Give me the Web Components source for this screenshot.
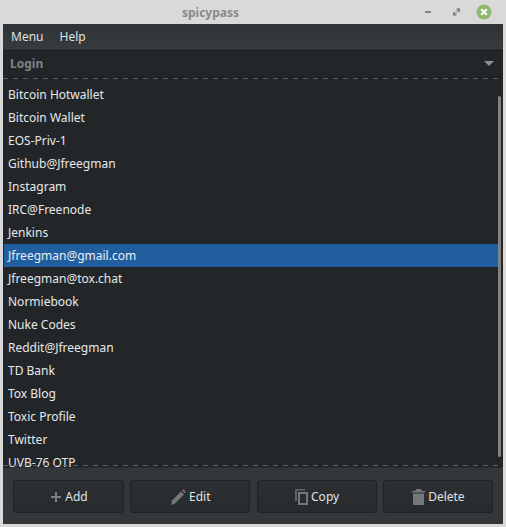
<!DOCTYPE html>
<html>
<head>
<meta charset="utf-8">
<title>spicypass</title>
<style>
  html, body { margin: 0; padding: 0; background: #d9d9d9; overflow: hidden; }
  body { font: 12px "Noto Sans", sans-serif; }
</style>
</head>
<body>
<app-window title="spicypass">
  <menu-bar slot="menu">
    <menu-item>Menu</menu-item>
    <menu-item>Help</menu-item>
  </menu-bar>
  <login-combo slot="combo">Login</login-combo>
  <entry-list slot="list">
    <entry-row>Bitcoin Hotwallet</entry-row>
    <entry-row>Bitcoin Wallet</entry-row>
    <entry-row>EOS-Priv-1</entry-row>
    <entry-row>Github@Jfreegman</entry-row>
    <entry-row>Instagram</entry-row>
    <entry-row>IRC@Freenode</entry-row>
    <entry-row>Jenkins</entry-row>
    <entry-row selected>Jfreegman@gmail.com</entry-row>
    <entry-row>Jfreegman@tox.chat</entry-row>
    <entry-row>Normiebook</entry-row>
    <entry-row>Nuke Codes</entry-row>
    <entry-row>Reddit@Jfreegman</entry-row>
    <entry-row>TD Bank</entry-row>
    <entry-row>Tox Blog</entry-row>
    <entry-row>Toxic Profile</entry-row>
    <entry-row>Twitter</entry-row>
    <entry-row>UVB-76 OTP</entry-row>
  </entry-list>
  <action-bar slot="actions">
    <action-button icon="add" style="width:111px">Add</action-button>
    <action-button icon="edit" style="width:120px">Edit</action-button>
    <action-button icon="copy" style="width:120px">Copy</action-button>
    <action-button icon="delete" style="width:110px">Delete</action-button>
  </action-bar>
</app-window>

<script>
class AppWindow extends HTMLElement {
  constructor() {
    super();
    this.attachShadow({ mode: 'open' });
  }

  connectedCallback() {
    this.shadowRoot.innerHTML = `
      <style>
        :host {
          display: flex;
          flex-direction: column;
          width: 506px;
          height: 527px;
          box-sizing: border-box;
          padding: 0 3px 3px 3px;
          background: #d9d9d9;
        }

        .titlebar {
          flex: none;
          height: 24px;
          display: flex;
          align-items: center;
          color: #8a8a8a;
          font-weight: 700;
          font-size: 12px;
        }

        .title {
          flex: 1;
          text-align: center;
        }

        .controls {
          display: flex;
          align-items: center;
          gap: 13px;
          padding-right: 11px;
        }

        .body {
          flex: 1;
          min-height: 0;
          display: flex;
          flex-direction: column;
          background: #232629;
        }

        svg { display: block; }
      </style>
      <div class="titlebar">
        <div class="title">${this.getAttribute('title')}</div>
        <div class="controls">
          <svg width="18" height="14" viewBox="0 0 18 14">
            <rect x="7" y="6" width="6" height="2" fill="#858585"/>
          </svg>
          <svg width="14" height="14" viewBox="0 0 14 14">
            <path d="M5.500 9 9.500 5" stroke="#b5b5b5" stroke-width="3"/>
            <path d="M7 3.500h4v4zM8 10.500H4v-4z" fill="#777"/>
          </svg>
          <svg width="16" height="16" viewBox="0 0 16 16">
            <circle cx="8" cy="8" r="7.500" fill="#8fb96c"/>
            <path d="M5.200 5.200l5.600 5.600M10.800 5.200l-5.600 5.600" stroke="#fff" stroke-width="2"/>
          </svg>
        </div>
      </div>
      <div class="body">
        <slot name="menu"></slot>
        <slot name="combo"></slot>
        <slot name="list"></slot>
        <slot name="actions"></slot>
      </div>
    `;
  }
}

class MenuBar extends HTMLElement {
  constructor() {
    super();
    this.attachShadow({ mode: 'open' });
    this.shadowRoot.innerHTML = `
      <style>
        :host {
          display: flex;
          flex: none;
          height: 26px;
          box-sizing: border-box;
          padding-left: 8px;
          gap: 16px;
          align-items: center;
          background: linear-gradient(#2f3336, #373b3e);
          border-bottom: 1px solid #2f3235;
        }
      </style>
      <slot></slot>
    `;
  }
}

class MenuItem extends HTMLElement {
  constructor() {
    super();
    this.attachShadow({ mode: 'open' });
    this.shadowRoot.innerHTML = `
      <style>
        :host {
          display: block;
          color: #dfe3e6;
          font: 12px "Noto Sans", sans-serif;
        }
      </style>
      <slot></slot>
    `;
  }
}

class LoginCombo extends HTMLElement {
  constructor() {
    super();
    this.attachShadow({ mode: 'open' });
    this.shadowRoot.innerHTML = `
      <style>
        :host {
          display: flex;
          flex: none;
          height: 28px;
          box-sizing: border-box;
          align-items: center;
          justify-content: space-between;
          padding: 0 9px 2px 7px;
          background: #232629;
          border-top: 1px solid #1d2022;
          border-bottom: 1px solid #1b1d1f;
          color: #7f8386;
          font: 700 12px "Noto Sans", sans-serif;
        }
        .arrow {
          width: 0;
          height: 0;
          border-left: 5px solid transparent;
          border-right: 5px solid transparent;
          border-top: 5px solid #8c8f91;
          margin-top: 1px;
        }
      </style>
      <slot></slot>
      <div class="arrow"></div>
    `;
  }
}

class EntryList extends HTMLElement {
  constructor() {
    super();
    this.attachShadow({ mode: 'open' });
    this.shadowRoot.innerHTML = `
      <style>
        :host {
          display: block;
          flex: none;
          height: 389px;
          position: relative;
          overflow: hidden;
          background: #232629;
          box-sizing: border-box;
          padding: 5px 1px 0 1px;
        }
        .dash {
          position: absolute;
          left: 0;
          right: 0;
          height: 1px;
          background: repeating-linear-gradient(90deg, #5c6063 0 5px, transparent 5px 10px);
        }
        .dash.top { top: 0; }
        .dash.bottom { bottom: 1px; }
        .bar {
          position: absolute;
          top: 18px;
          left: 495px;
          width: 3px;
          height: 361px;
          background: #7e8284;
          border-radius: 2px;
        }
      </style>
      <div class="dash top"></div>
      <slot></slot>
      <div class="dash bottom"></div>
      <div class="bar"></div>
    `;
  }
}

class EntryRow extends HTMLElement {
  constructor() {
    super();
    this.attachShadow({ mode: 'open' });
    this.shadowRoot.innerHTML = `
      <style>
        :host {
          display: block;
          height: 23px;
          padding-left: 4px;
          margin-right: 3px;
          color: #e6e8ea;
          font: 12px/23px "Noto Sans", sans-serif;
          white-space: nowrap;
        }
        :host([selected]) {
          background: #205e9f;
          color: #e8eef4;
        }
      </style>
      <slot></slot>
    `;
  }
}

class ActionBar extends HTMLElement {
  constructor() {
    super();
    this.attachShadow({ mode: 'open' });
    this.shadowRoot.innerHTML = `
      <style>
        :host {
          display: flex;
          flex: 1;
          min-height: 0;
          box-sizing: border-box;
          gap: 6.300px;
          padding: 12px 10px 11px 10px;
          background: #33373a;
          border-top: 1px solid #2a2d30;
        }
      </style>
      <slot></slot>
    `;
  }
}

const ICONS = {
  add: `<svg width="12" height="12" viewBox="0 0 12 12"><path d="M5 1h2v4h4v2H7v4H5V7H1V5h4z" fill="#7c7f81"/></svg>`,
  edit: `<svg width="15" height="16" viewBox="0 0 15 16"><path d="M0 16 1 11.500 10 2.500 13 5.500 4 14.500z" fill="#75787a"/><path d="M11 1.500 12.200 0.300 14.900 3 13.700 4.200z" fill="#75787a"/></svg>`,
  copy: `<svg width="13" height="16" viewBox="0 0 13 16"><path d="M1 0h9v1.500H2V12H0V1z" fill="#626568"/><rect x="4" y="4" width="8" height="11" fill="none" stroke="#75787a" stroke-width="2"/></svg>`,
  delete: `<svg width="13" height="16" viewBox="0 0 13 16"><path d="M4 0h5l.800 2H13v1.500H0V2h3.200z" fill="#75787a"/><path d="M1 4.500h11V16H1z" fill="#75787a"/></svg>`
};

class ActionButton extends HTMLElement {
  constructor() {
    super();
    this.attachShadow({ mode: 'open' });
  }

  connectedCallback() {
    this.shadowRoot.innerHTML = `
      <style>
        :host {
          display: flex;
          flex: none;
          box-sizing: border-box;
          align-items: center;
          justify-content: center;
          gap: 3px;
          padding-left: 1px;
          height: 33px;
          border: 1px solid #1f2224;
          border-radius: 3px;
          background: linear-gradient(#2c3033, #282b2e);
          color: #dfe3e6;
          font: 12px "Noto Sans", sans-serif;
        }
      </style>
      ${ICONS[this.getAttribute('icon')]}
      <slot></slot>
    `;
  }
}

customElements.define('app-window', AppWindow);
customElements.define('menu-bar', MenuBar);
customElements.define('menu-item', MenuItem);
customElements.define('login-combo', LoginCombo);
customElements.define('entry-list', EntryList);
customElements.define('entry-row', EntryRow);
customElements.define('action-bar', ActionBar);
customElements.define('action-button', ActionButton);
</script>
</body>
</html>
